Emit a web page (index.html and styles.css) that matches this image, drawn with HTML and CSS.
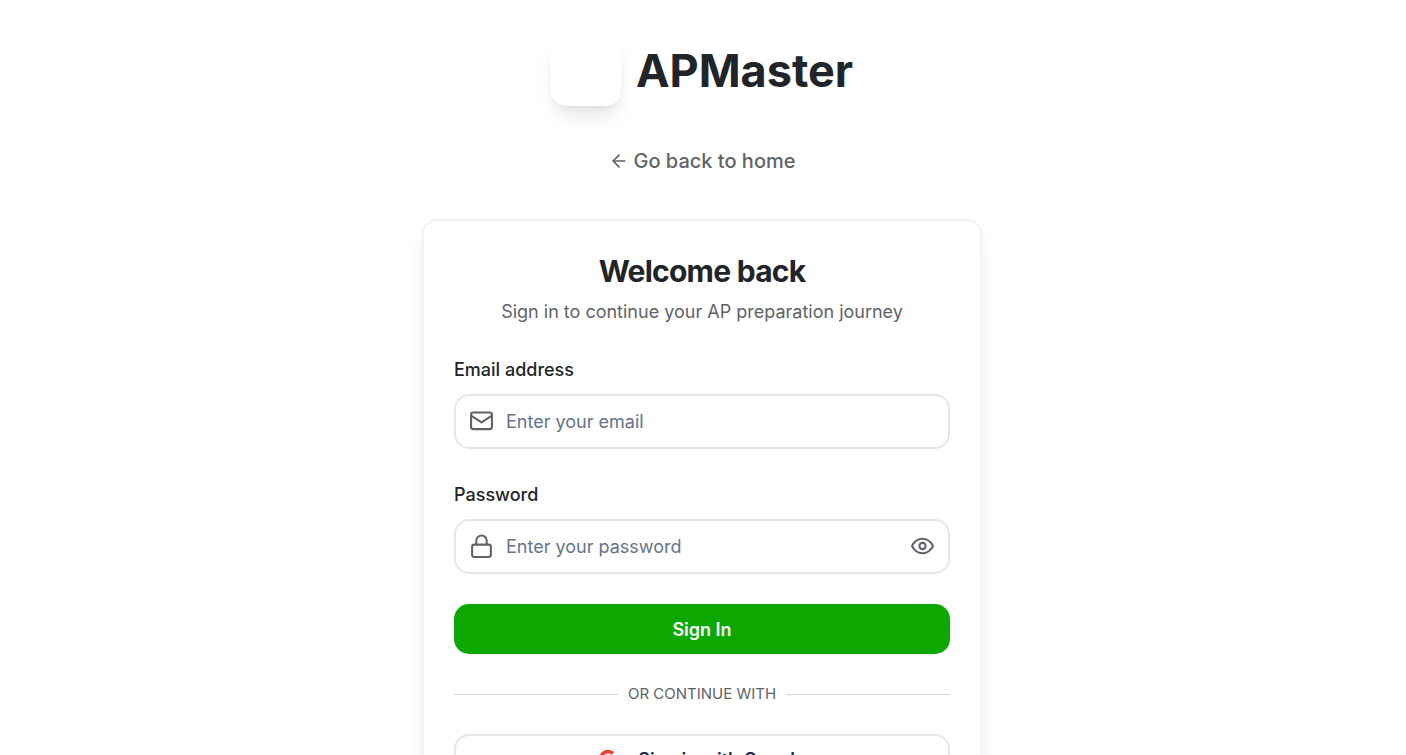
FILE: index.html
```html
<!DOCTYPE html>
<html lang="en">
<head>
<meta charset="utf-8">
<meta name="viewport" content="width=device-width, initial-scale=1">
<title>APMaster - Sign in</title>
<link rel="stylesheet" href="styles.css">
</head>
<body>
<main class="page">
  <header class="brand">
    <div class="brand-logo"></div>
    <span class="brand-name">APMaster</span>
  </header>
  <a class="back-link" href="#">
    <svg class="back-icon" viewBox="0 0 24 24" aria-hidden="true"><path d="M19 12H5"/><path d="m12 19-7-7 7-7"/></svg>
    Go back to home
  </a>
  <section class="card">
    <h1 class="card-title">Welcome back</h1>
    <p class="card-subtitle">Sign in to continue your AP preparation journey</p>
    <form class="form">
      <div class="field">
        <label class="label" for="email">Email address</label>
        <div class="input-box">
          <svg class="icon" viewBox="0 0 24 24" aria-hidden="true"><rect x="2" y="3.300" width="20" height="16" rx="2"/><path d="M2 6.300l10 6.500 10-6.500"/></svg>
          <input class="input" id="email" type="email" placeholder="Enter your email">
        </div>
      </div>
      <div class="field">
        <label class="label" for="password">Password</label>
        <div class="input-box">
          <svg class="icon" viewBox="0 0 24 24" aria-hidden="true"><rect x="3" y="10.200" width="18" height="11.800" rx="2"/><path d="M7 10V6.500a5 5 0 0 1 10 0V10"/></svg>
          <input class="input" id="password" type="password" placeholder="Enter your password">
          <button class="reveal" type="button" aria-label="Show password">
            <svg class="icon" viewBox="0 0 24 24" aria-hidden="true"><path d="M2 11.500s3-7 10-7 10 7 10 7-3 7-10 7-10-7-10-7Z"/><circle cx="12" cy="11.500" r="3"/></svg>
          </button>
        </div>
      </div>
      <button class="submit" type="submit">Sign In</button>
      <div class="divider">OR CONTINUE WITH</div>
      <button class="google" type="button">
        <svg class="google-icon" viewBox="0 0 24 24" aria-hidden="true">
          <path fill="#4285f4" d="M22.560 12.250c0-.78-.07-1.530-.2-2.250H12v4.260h5.920c-.26 1.370-1.040 2.530-2.210 3.310v2.770h3.570c2.080-1.920 3.280-4.740 3.280-8.090z"/>
          <path fill="#34a853" d="M12 23c2.970 0 5.460-.98 7.280-2.660l-3.570-2.770c-.98.66-2.230 1.060-3.710 1.060-2.860 0-5.290-1.930-6.160-4.530H2.180v2.840C3.990 20.530 7.700 23 12 23z"/>
          <path fill="#fbbc05" d="M5.840 14.090c-.22-.66-.35-1.360-.35-2.090s.13-1.430.35-2.090V7.070H2.180C1.430 8.550 1 10.220 1 12s.43 3.450 1.180 4.930l3.660-2.840z"/>
          <path fill="#ea4335" d="M12 5.380c1.620 0 3.060.56 4.210 1.640l3.150-3.150C17.450 2.090 14.970 1 12 1 7.700 1 3.990 3.470 2.180 7.070l3.660 2.840c.87-2.600 3.300-4.530 6.160-4.530z"/>
        </svg>
        Sign in with Google
      </button>
    </form>
  </section>
</main>
</body>
</html>
```
FILE: styles.css
```css
* { box-sizing: border-box; }

body {
  margin: 0;
  background: #fff;
  color: #212529;
  font-family: Inter, "Liberation Sans", sans-serif;
  font-size: 18px;
}

.page {
  display: flex;
  flex-direction: column;
  align-items: center;
  padding: 36px 22px 36px 20px;
}

.brand {
  display: flex;
  align-items: center;
  gap: 15px;
}

.brand-logo {
  width: 70px;
  height: 70px;
  border-radius: 15px;
  background: #fff;
  box-shadow: 0 12px 20px -4px rgba(0, 0, 0, 0.1), 0 5px 8px -5px rgba(0, 0, 0, 0.1);
}

.brand-name {
  font-size: 45px;
  font-weight: 700;
  line-height: 50px;
}

.back-link {
  display: flex;
  align-items: center;
  gap: 5px;
  margin-top: 40px;
  color: #5f6368;
  font-size: 20px;
  font-weight: 500;
  line-height: 30px;
  text-decoration: none;
}

.back-icon {
  width: 20px;
  height: 20px;
  fill: none;
  stroke: currentColor;
  stroke-width: 2;
  stroke-linecap: round;
  stroke-linejoin: round;
}

.card {
  width: 100%;
  max-width: 560px;
  margin-top: 43px;
  padding: 30px;
  border: 2px solid #f3f3f4;
  border-radius: 15px;
  background: #fff;
  box-shadow: 0 12px 22px -4px rgba(0, 0, 0, 0.09), 0 5px 8px -5px rgba(0, 0, 0, 0.1);
}

.card-title {
  margin: 0;
  font-size: 30px;
  font-weight: 700;
  line-height: 40px;
  letter-spacing: -0.025em;
  text-align: center;
}

.card-subtitle {
  margin: 8px 0 0;
  color: #5f6368;
  line-height: 25px;
  text-align: center;
}

.form {
  display: flex;
  flex-direction: column;
  gap: 30px;
  margin-top: 33px;
}

.field {
  display: flex;
  flex-direction: column;
  gap: 12px;
}

.field + .field { margin-top: 3px; }

.label {
  font-weight: 500;
  line-height: 25px;
}

.input-box {
  display: flex;
  align-items: center;
  gap: 12px;
  height: 55px;
  padding: 0 13px;
  border: 2px solid #e5e7eb;
  border-radius: 15px;
}

.icon {
  display: block;
  flex: none;
  width: 25px;
  height: 25px;
  fill: none;
  stroke: #5f6368;
  stroke-width: 2;
  stroke-linecap: round;
  stroke-linejoin: round;
}

.input {
  flex: 1;
  min-width: 0;
  padding: 0;
  border: 0;
  outline: 0;
  background: transparent;
  color: inherit;
  font: inherit;
}

.input::placeholder { color: #64748b; opacity: 1; }

.reveal {
  padding: 0;
  border: 0;
  background: none;
  cursor: pointer;
}

.submit {
  height: 50px;
  border: 0;
  border-radius: 15px;
  background: #0ca800;
  color: #fff;
  font: inherit;
  font-weight: 600;
  cursor: pointer;
}

.divider {
  display: flex;
  align-items: center;
  gap: 10px;
  color: #5f6368;
  font-size: 15px;
  line-height: 20px;
}

.divider::before,
.divider::after {
  content: "";
  flex: 1;
  height: 1px;
  background: #d1d5db;
}

.google {
  display: flex;
  align-items: center;
  justify-content: center;
  gap: 20px;
  height: 50px;
  border: 2px solid #e5e7eb;
  border-radius: 15px;
  background: #fff;
  color: #1f2a4d;
  font: inherit;
  font-weight: 600;
  cursor: pointer;
}

.google-icon {
  width: 20px;
  height: 20px;
}
```
